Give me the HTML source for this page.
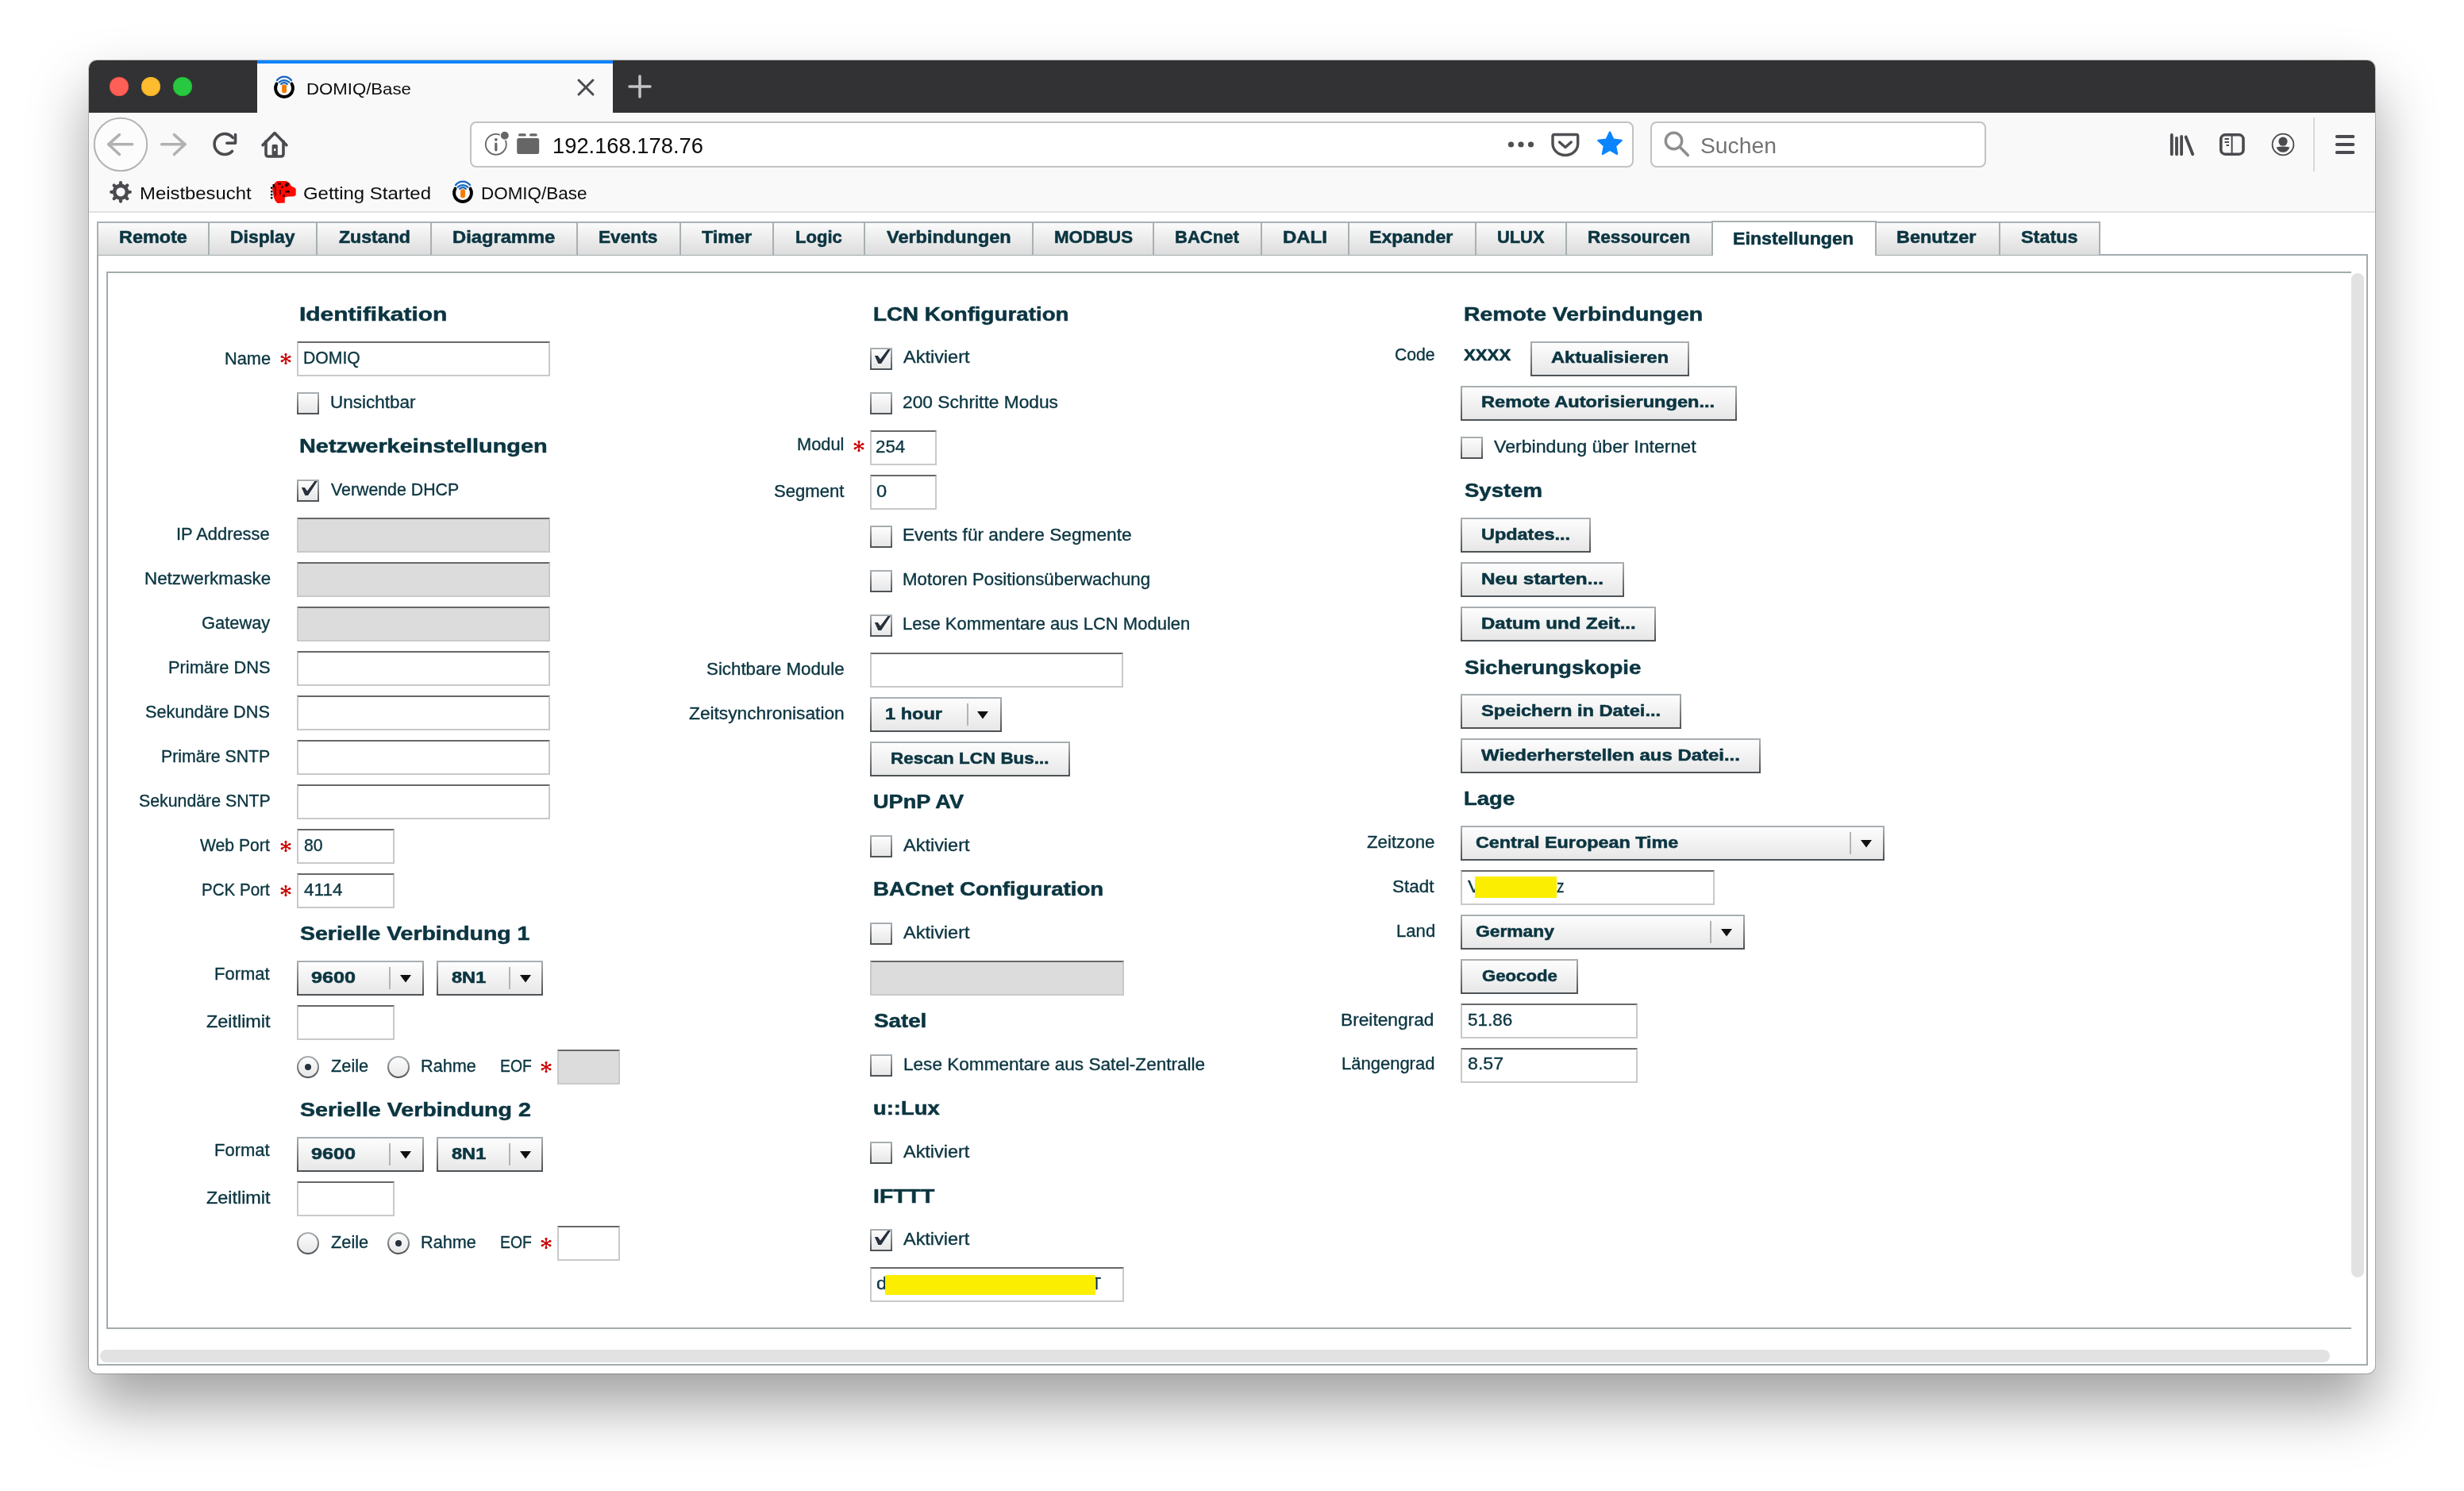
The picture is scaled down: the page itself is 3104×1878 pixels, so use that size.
<!DOCTYPE html>
<html><head><meta charset="utf-8"><title>DOMIQ/Base</title>
<style>
html,body{margin:0;padding:0;}
body{width:3104px;height:1878px;overflow:hidden;position:relative;background:#fff;font-family:'Liberation Sans', sans-serif;}
span{position:absolute;white-space:pre;line-height:1;transform-origin:0 0;}
</style></head><body>
<div style="position:absolute;left:112px;top:76px;width:2880px;height:1654px;border-radius:10px;background:#fff;box-shadow:0 40px 76px rgba(0,0,0,0.375),0 0 0 1px rgba(0,0,0,0.2);overflow:hidden;">
  <div style="position:absolute;left:0;top:0;width:2880px;height:66px;background:#323234;"></div>
  <div style="position:absolute;left:0;top:66px;width:2880px;height:125px;background:#f9f9fa;"></div>
  <div style="position:absolute;left:0;top:190px;width:2880px;height:2px;background:#e1e1e1;"></div>
</div>
<div style="position:absolute;left:138px;top:97px;width:24px;height:24px;border-radius:50%;background:#fe5f57;box-shadow:inset 0 0 0 0.6px #e0443e;"></div><div style="position:absolute;left:178px;top:97px;width:24px;height:24px;border-radius:50%;background:#febc2e;box-shadow:inset 0 0 0 0.6px #dea123;"></div><div style="position:absolute;left:218px;top:97px;width:24px;height:24px;border-radius:50%;background:#28c840;box-shadow:inset 0 0 0 0.6px #1aab29;"></div><div style="position:absolute;left:324px;top:76px;width:448px;height:66px;background:#f9f9fa;"></div><div style="position:absolute;left:324px;top:76px;width:448px;height:4px;background:#0a84ff;"></div><svg style="position:absolute;left:341.9px;top:92.5px;overflow:visible" width="32" height="34" viewBox="0 0 32 34"><g transform="translate(16,18)"><path d="M -9.5 -5.5 A 11 11 0 1 0 9.5 -5.5" fill="none" stroke="#000" stroke-width="3.9" stroke-linecap="round"/><rect x="-2.9" y="-4.7" width="5.9" height="11" rx="2.7" fill="#f57c00"/><g fill="none" stroke="#1565c0" stroke-width="2.3" stroke-linecap="round"><path d="M -8.95 -10 A 11.5 11.5 0 0 1 8.95 -10"/><path d="M -6.25 -7.4 A 9.3 9.3 0 0 1 6.25 -7.4"/><path d="M -3.8 -5.1 A 5.1 5.1 0 0 1 3.8 -5.1"/></g></g></svg><svg style="position:absolute;left:726px;top:98px;overflow:visible" width="24" height="24" viewBox="0 0 24 24"><g stroke="#4a4a4f" stroke-width="3" stroke-linecap="round"><line x1="3" y1="3" x2="21" y2="21"/><line x1="21" y1="3" x2="3" y2="21"/></g></svg><svg style="position:absolute;left:790px;top:93px;overflow:visible" width="32" height="32" viewBox="0 0 32 32"><g stroke="#c4c4c6" stroke-width="3.5" stroke-linecap="round"><line x1="16" y1="3" x2="16" y2="29"/><line x1="3" y1="16" x2="29" y2="16"/></g></svg><svg style="position:absolute;left:116px;top:146px;overflow:visible" width="72" height="72" viewBox="0 0 72 72"><circle cx="36" cy="36" r="33.2" fill="#fcfcfc" stroke="#b3b3b3" stroke-width="2"/></svg><svg style="position:absolute;left:130px;top:160px;overflow:visible" width="44" height="44" viewBox="0 0 44 44"><g fill="none" stroke="#b1b1b3" stroke-width="3.6" stroke-linecap="round" stroke-linejoin="round"><polyline points="20.4,9.6 6.7,21.8 20.4,34.5"/><line x1="6.7" y1="21.8" x2="36.6" y2="21.8"/></g></svg><svg style="position:absolute;left:196px;top:160px;overflow:visible" width="44" height="44" viewBox="0 0 44 44"><g fill="none" stroke="#b1b1b3" stroke-width="3.6" stroke-linecap="round" stroke-linejoin="round"><polyline points="23.4,9.6 37,21.8 23.4,34.5"/><line x1="37" y1="21.8" x2="7.6" y2="21.8"/></g></svg><svg style="position:absolute;left:260px;top:160px;overflow:visible" width="44" height="44" viewBox="0 0 44 44"><g fill="none" stroke="#4a4a4f" stroke-width="3.6" stroke-linecap="round" stroke-linejoin="round"><path d="M 33.3 13.5 A 13 13 0 1 0 32.5 30.5"/><polyline points="36.5,9.6 36.5,20.3 25.8,20.3"/></g></svg><svg style="position:absolute;left:324px;top:160px;overflow:visible" width="44" height="44" viewBox="0 0 44 44"><g fill="none" stroke="#4a4a4f" stroke-width="3.6" stroke-linecap="round" stroke-linejoin="round"><polyline points="7,22.8 22,7.6 36.9,22.8"/><path d="M 11 18 V 34 Q 11 37 14 37 H 30 Q 33 37 33 34 V 18"/></g><rect x="18.6" y="22" width="7.2" height="15" rx="1.5" fill="#4a4a4f"/><rect x="21" y="27.3" width="2.4" height="2.8" fill="#f9f9fa"/></svg><div style="position:absolute;left:592px;top:153px;width:1462px;height:54px;border:2px solid #c2c2c2;border-radius:8px;background:#fff;"></div><svg style="position:absolute;left:605px;top:162px;overflow:visible" width="40" height="40" viewBox="0 0 40 40"><circle cx="19.8" cy="19.8" r="13" fill="none" stroke="#666" stroke-width="1.8"/><circle cx="19.8" cy="13.8" r="1.9" fill="#666"/><rect x="18.2" y="17.5" width="3.2" height="11" rx="1.6" fill="#666"/><circle cx="30.8" cy="8.8" r="5.6" fill="#666" stroke="#fff" stroke-width="1.2"/></svg><svg style="position:absolute;left:650px;top:166px;overflow:visible" width="32" height="30" viewBox="0 0 32 30"><rect x="1.2" y="8" width="28" height="20" rx="2.2" fill="#666"/><rect x="3" y="2.2" width="9.8" height="3.4" rx="1.7" fill="#666"/><rect x="17" y="2.2" width="9.8" height="3.4" rx="1.7" fill="#666"/></svg><svg style="position:absolute;left:1896px;top:174px;overflow:visible" width="40" height="16" viewBox="0 0 40 16"><g fill="#4f4f53"><circle cx="7.5" cy="8" r="3.6"/><circle cx="20" cy="8" r="3.6"/><circle cx="32.5" cy="8" r="3.6"/></g></svg><svg style="position:absolute;left:1952px;top:164px;overflow:visible" width="40" height="36" viewBox="0 0 40 36"><path d="M 6 5.5 H 33.8 Q 35.7 5.5 35.7 7.5 V 17 A 15.8 14.5 0 0 1 4 17 V 7.5 Q 4 5.5 6 5.5 Z" fill="none" stroke="#4f4f53" stroke-width="3.4" stroke-linejoin="round"/><polyline points="12.5,15 19.9,21.5 27.3,15" fill="none" stroke="#4f4f53" stroke-width="3.4" stroke-linecap="round" stroke-linejoin="round"/></svg><svg style="position:absolute;left:2010px;top:164px;overflow:visible" width="36" height="36" viewBox="0 0 36 36"><path d="M 18 2.5 L 22.3 11.8 L 32.6 12.9 L 25 19.8 L 27.1 29.9 L 18 24.8 L 8.9 29.9 L 11 19.8 L 3.4 12.9 L 13.7 11.8 Z" fill="#0a84ff" stroke="#0a84ff" stroke-width="2.4" stroke-linejoin="round"/></svg><div style="position:absolute;left:2079px;top:153px;width:419px;height:54px;border:2px solid #c2c2c2;border-radius:8px;background:#fff;"></div><svg style="position:absolute;left:2092px;top:162px;overflow:visible" width="40" height="40" viewBox="0 0 40 40"><circle cx="16.5" cy="15.5" r="10.2" fill="none" stroke="#8e8e90" stroke-width="3.4"/><line x1="24" y1="23" x2="34.3" y2="33.5" stroke="#8e8e90" stroke-width="3.6" stroke-linecap="round"/></svg><svg style="position:absolute;left:2730px;top:164px;overflow:visible" width="40" height="36" viewBox="0 0 40 36"><g stroke="#4a4a4f" stroke-width="3.8" stroke-linecap="round"><line x1="5.8" y1="5.8" x2="5.8" y2="30.3"/><line x1="12" y1="9.8" x2="12" y2="30.3"/><line x1="18.1" y1="8" x2="18.1" y2="30.3"/><line x1="23.6" y1="8.5" x2="32.2" y2="30.3"/></g></svg><svg style="position:absolute;left:2792px;top:164px;overflow:visible" width="40" height="36" viewBox="0 0 40 36"><rect x="5.8" y="5.8" width="28.2" height="24.4" rx="5.5" fill="none" stroke="#4a4a4f" stroke-width="3.6"/><line x1="19.6" y1="6" x2="19.6" y2="30" stroke="#4a4a4f" stroke-width="2"/><g stroke="#4a4a4f" stroke-width="2"><line x1="10.5" y1="11" x2="16" y2="11"/><line x1="10.5" y1="15" x2="16" y2="15"/><line x1="12.5" y1="19" x2="16" y2="19"/></g></svg><svg style="position:absolute;left:2858px;top:164px;overflow:visible" width="36" height="36" viewBox="0 0 36 36"><circle cx="18" cy="18" r="13.4" fill="none" stroke="#4a4a4f" stroke-width="1.8"/><circle cx="18" cy="14.2" r="5.6" fill="#4a4a4f"/><path d="M 9.6 21.5 Q 18 19.5 26.4 21.5 Q 24 27.8 18 27.8 Q 12 27.8 9.6 21.5 Z" fill="#4a4a4f"/></svg><div style="position:absolute;left:2914px;top:148px;width:2px;height:68px;background:#d9d9db;"></div><svg style="position:absolute;left:2938px;top:164px;overflow:visible" width="32" height="36" viewBox="0 0 32 36"><g stroke="#4a4a4f" stroke-width="3.8" stroke-linecap="round"><line x1="5.8" y1="8" x2="26.4" y2="8"/><line x1="5.8" y1="18" x2="26.4" y2="18"/><line x1="5.8" y1="28" x2="26.4" y2="28"/></g></svg><svg style="position:absolute;left:134px;top:226px;overflow:visible" width="36" height="32" viewBox="0 0 36 32"><g transform="translate(18,15.8)"><circle r="7.9" fill="none" stroke="#4a4a4f" stroke-width="4.6"/><g stroke="#4a4a4f" stroke-width="4.2" stroke-linecap="round"><line x1="0" y1="-9" x2="0" y2="-11.8" transform="rotate(0)"/><line x1="0" y1="-9" x2="0" y2="-11.8" transform="rotate(45)"/><line x1="0" y1="-9" x2="0" y2="-11.8" transform="rotate(90)"/><line x1="0" y1="-9" x2="0" y2="-11.8" transform="rotate(135)"/><line x1="0" y1="-9" x2="0" y2="-11.8" transform="rotate(180)"/><line x1="0" y1="-9" x2="0" y2="-11.8" transform="rotate(225)"/><line x1="0" y1="-9" x2="0" y2="-11.8" transform="rotate(270)"/><line x1="0" y1="-9" x2="0" y2="-11.8" transform="rotate(315)"/></g></g></svg><svg style="position:absolute;left:335px;top:220px;overflow:visible" width="44" height="44" viewBox="0 0 44 44"><path d="M 14.2 8 L 25.6 8 L 29.9 10.6 L 31.7 14.2 L 35.9 16.3 L 37.7 18.1 L 37.7 25.6 L 35.9 27.2 L 26.6 27.8 L 23.8 28.7 L 23.8 35.6 L 14.5 35.9 L 12 33.2 L 10 28.7 L 8.1 18.1 L 10 12 L 12 9.7 Z" fill="#ff0a00"/><g fill="#6a0000"><rect x="15" y="10" width="4" height="3"/><rect x="19" y="14" width="3" height="3"/><rect x="17" y="19" width="2" height="6"/><rect x="25" y="10" width="4" height="4"/><rect x="24" y="20" width="6" height="3"/><rect x="11" y="15" width="2" height="12"/><rect x="21" y="25" width="3" height="3"/></g><g fill="#000"><rect x="6" y="15.5" width="2.4" height="2.4"/><rect x="6" y="20" width="2.4" height="2.4"/><rect x="6" y="24" width="2.4" height="2.4"/><rect x="6" y="28" width="2.4" height="2.4"/><rect x="8.5" y="12" width="2.4" height="4"/><rect x="24" y="12" width="3" height="3"/><rect x="27" y="20" width="2" height="2"/></g></svg><svg style="position:absolute;left:566.8px;top:224.8px;overflow:visible" width="32" height="34" viewBox="0 0 32 34"><g transform="translate(16,18)"><path d="M -9.5 -5.5 A 11 11 0 1 0 9.5 -5.5" fill="none" stroke="#000" stroke-width="3.9" stroke-linecap="round"/><rect x="-2.9" y="-4.7" width="5.9" height="11" rx="2.7" fill="#f57c00"/><g fill="none" stroke="#1565c0" stroke-width="2.3" stroke-linecap="round"><path d="M -8.95 -10 A 11.5 11.5 0 0 1 8.95 -10"/><path d="M -6.25 -7.4 A 9.3 9.3 0 0 1 6.25 -7.4"/><path d="M -3.8 -5.1 A 5.1 5.1 0 0 1 3.8 -5.1"/></g></g></svg>
<div style="position:absolute;left:122px;top:320px;width:2857px;height:1396px;border:2px solid #a3abae;"></div>
<div style="position:absolute;left:134px;top:342px;width:2826px;height:1328px;border:2px solid #a3abae;border-right:none;"></div>
<div style="position:absolute;left:2962px;top:344px;width:16px;height:1265px;border-radius:8px;background:#e2e2e2;"></div>
<div style="position:absolute;left:126px;top:1700px;width:2809px;height:16px;border-radius:8px;background:#e2e2e2;"></div>
<div style="position:absolute;left:122px;top:279px;width:138px;height:40px;background:linear-gradient(#fbfbfb,#dcdcdc);border:2px solid #a9b0b3;border-bottom:none;"></div><div style="position:absolute;left:262px;top:279px;width:134px;height:40px;background:linear-gradient(#fbfbfb,#dcdcdc);border:2px solid #a9b0b3;border-bottom:none;"></div><div style="position:absolute;left:398px;top:279px;width:142px;height:40px;background:linear-gradient(#fbfbfb,#dcdcdc);border:2px solid #a9b0b3;border-bottom:none;"></div><div style="position:absolute;left:542px;top:279px;width:182px;height:40px;background:linear-gradient(#fbfbfb,#dcdcdc);border:2px solid #a9b0b3;border-bottom:none;"></div><div style="position:absolute;left:726px;top:279px;width:128px;height:40px;background:linear-gradient(#fbfbfb,#dcdcdc);border:2px solid #a9b0b3;border-bottom:none;"></div><div style="position:absolute;left:856px;top:279px;width:115px;height:40px;background:linear-gradient(#fbfbfb,#dcdcdc);border:2px solid #a9b0b3;border-bottom:none;"></div><div style="position:absolute;left:973px;top:279px;width:113px;height:40px;background:linear-gradient(#fbfbfb,#dcdcdc);border:2px solid #a9b0b3;border-bottom:none;"></div><div style="position:absolute;left:1088px;top:279px;width:210px;height:40px;background:linear-gradient(#fbfbfb,#dcdcdc);border:2px solid #a9b0b3;border-bottom:none;"></div><div style="position:absolute;left:1300px;top:279px;width:150px;height:40px;background:linear-gradient(#fbfbfb,#dcdcdc);border:2px solid #a9b0b3;border-bottom:none;"></div><div style="position:absolute;left:1452px;top:279px;width:134px;height:40px;background:linear-gradient(#fbfbfb,#dcdcdc);border:2px solid #a9b0b3;border-bottom:none;"></div><div style="position:absolute;left:1588px;top:279px;width:108px;height:40px;background:linear-gradient(#fbfbfb,#dcdcdc);border:2px solid #a9b0b3;border-bottom:none;"></div><div style="position:absolute;left:1698px;top:279px;width:158px;height:40px;background:linear-gradient(#fbfbfb,#dcdcdc);border:2px solid #a9b0b3;border-bottom:none;"></div><div style="position:absolute;left:1858px;top:279px;width:112px;height:40px;background:linear-gradient(#fbfbfb,#dcdcdc);border:2px solid #a9b0b3;border-bottom:none;"></div><div style="position:absolute;left:1972px;top:279px;width:182px;height:40px;background:linear-gradient(#fbfbfb,#dcdcdc);border:2px solid #a9b0b3;border-bottom:none;"></div><div style="position:absolute;left:2156px;top:278px;width:204px;height:42px;background:#fff;border:2px solid #a9b0b3;border-bottom:none;"></div><div style="position:absolute;left:2362px;top:279px;width:154px;height:40px;background:linear-gradient(#fbfbfb,#dcdcdc);border:2px solid #a9b0b3;border-bottom:none;"></div><div style="position:absolute;left:2518px;top:279px;width:124px;height:40px;background:linear-gradient(#fbfbfb,#dcdcdc);border:2px solid #a9b0b3;border-bottom:none;"></div>
<div style="position:absolute;left:374px;top:430px;width:315px;height:40px;background:#fff;border:2px solid #c9c9c9;border-top-color:#676767;"></div><svg style="position:absolute;left:352.4px;top:444.4px" width="16" height="16"><g stroke="#cc0000" stroke-width="1.6" stroke-linecap="round"><line x1="8.00" y1="2.40" x2="8.00" y2="13.60"/><line x1="3.15" y1="5.20" x2="12.85" y2="10.80"/><line x1="3.15" y1="10.80" x2="12.85" y2="5.20"/></g><g fill="#cc0000"><circle cx="8.00" cy="13.60" r="1.55"/><circle cx="8.00" cy="2.40" r="1.55"/><circle cx="12.85" cy="10.80" r="1.55"/><circle cx="3.15" cy="5.20" r="1.55"/><circle cx="12.85" cy="5.20" r="1.55"/><circle cx="3.15" cy="10.80" r="1.55"/></g><circle cx="8" cy="8" r="1.7" fill="#cc0000"/></svg><div style="position:absolute;left:374px;top:494px;width:24px;height:24px;border:2px solid transparent;border-image:linear-gradient(#a9afb2,#4d5256) 1;background:linear-gradient(#fdfdfd,#e7e7e7);"></div><div style="position:absolute;left:374px;top:604px;width:24px;height:24px;border:2px solid transparent;border-image:linear-gradient(#a9afb2,#4d5256) 1;background:linear-gradient(#fdfdfd,#e7e7e7);"></div><svg style="position:absolute;left:374px;top:604px" width="28" height="28"><polygon points="5.9,10.1 9.8,10.1 13.0,14.4 22.4,2.0 25.9,2.0 14.1,19.9 10.3,19.9" fill="#27313c"/></svg><div style="position:absolute;left:374px;top:652px;width:315px;height:40px;background:#dcdcdc;border:2px solid #c9c9c9;border-top-color:#676767;"></div><div style="position:absolute;left:374px;top:708px;width:315px;height:40px;background:#dcdcdc;border:2px solid #c9c9c9;border-top-color:#676767;"></div><div style="position:absolute;left:374px;top:764px;width:315px;height:40px;background:#dcdcdc;border:2px solid #c9c9c9;border-top-color:#676767;"></div><div style="position:absolute;left:374px;top:820px;width:315px;height:40px;background:#fff;border:2px solid #c9c9c9;border-top-color:#676767;"></div><div style="position:absolute;left:374px;top:876px;width:315px;height:40px;background:#fff;border:2px solid #c9c9c9;border-top-color:#676767;"></div><div style="position:absolute;left:374px;top:932px;width:315px;height:40px;background:#fff;border:2px solid #c9c9c9;border-top-color:#676767;"></div><div style="position:absolute;left:374px;top:988px;width:315px;height:40px;background:#fff;border:2px solid #c9c9c9;border-top-color:#676767;"></div><div style="position:absolute;left:374px;top:1044px;width:119px;height:40px;background:#fff;border:2px solid #c9c9c9;border-top-color:#676767;"></div><svg style="position:absolute;left:352.4px;top:1058.4px" width="16" height="16"><g stroke="#cc0000" stroke-width="1.6" stroke-linecap="round"><line x1="8.00" y1="2.40" x2="8.00" y2="13.60"/><line x1="3.15" y1="5.20" x2="12.85" y2="10.80"/><line x1="3.15" y1="10.80" x2="12.85" y2="5.20"/></g><g fill="#cc0000"><circle cx="8.00" cy="13.60" r="1.55"/><circle cx="8.00" cy="2.40" r="1.55"/><circle cx="12.85" cy="10.80" r="1.55"/><circle cx="3.15" cy="5.20" r="1.55"/><circle cx="12.85" cy="5.20" r="1.55"/><circle cx="3.15" cy="10.80" r="1.55"/></g><circle cx="8" cy="8" r="1.7" fill="#cc0000"/></svg><div style="position:absolute;left:374px;top:1100px;width:119px;height:40px;background:#fff;border:2px solid #c9c9c9;border-top-color:#676767;"></div><svg style="position:absolute;left:352.4px;top:1114.4px" width="16" height="16"><g stroke="#cc0000" stroke-width="1.6" stroke-linecap="round"><line x1="8.00" y1="2.40" x2="8.00" y2="13.60"/><line x1="3.15" y1="5.20" x2="12.85" y2="10.80"/><line x1="3.15" y1="10.80" x2="12.85" y2="5.20"/></g><g fill="#cc0000"><circle cx="8.00" cy="13.60" r="1.55"/><circle cx="8.00" cy="2.40" r="1.55"/><circle cx="12.85" cy="10.80" r="1.55"/><circle cx="3.15" cy="5.20" r="1.55"/><circle cx="12.85" cy="5.20" r="1.55"/><circle cx="3.15" cy="10.80" r="1.55"/></g><circle cx="8" cy="8" r="1.7" fill="#cc0000"/></svg><div style="position:absolute;left:374px;top:1210px;width:156px;height:40px;border:2px solid transparent;border-image:linear-gradient(#a9afb2,#4d5256) 1;background:linear-gradient(#fdfdfd,#e7e7e7);"></div><div style="position:absolute;left:490px;top:1218px;width:2px;height:28px;background:#b0b4b7;"></div><svg style="position:absolute;left:504px;top:1228px" width="14" height="10"><polygon points="0,0 14,0 7,9.5" fill="#111"/></svg><div style="position:absolute;left:550px;top:1210px;width:130px;height:40px;border:2px solid transparent;border-image:linear-gradient(#a9afb2,#4d5256) 1;background:linear-gradient(#fdfdfd,#e7e7e7);"></div><div style="position:absolute;left:641px;top:1218px;width:2px;height:28px;background:#b0b4b7;"></div><svg style="position:absolute;left:655px;top:1228px" width="14" height="10"><polygon points="0,0 14,0 7,9.5" fill="#111"/></svg><div style="position:absolute;left:374px;top:1266px;width:119px;height:40px;background:#fff;border:2px solid #c9c9c9;border-top-color:#676767;"></div><svg style="position:absolute;left:374px;top:1330px" width="28" height="28"><defs><linearGradient id="rg3741330" x1="0" y1="0" x2="0" y2="1"><stop offset="0" stop-color="#a9afb2"/><stop offset="1" stop-color="#4d5256"/></linearGradient><linearGradient id="rf3741330" x1="0" y1="0" x2="0" y2="1"><stop offset="0" stop-color="#fdfdfd"/><stop offset="1" stop-color="#e7e7e7"/></linearGradient></defs><circle cx="14" cy="14" r="13" fill="url(#rf3741330)" stroke="url(#rg3741330)" stroke-width="2"/><circle cx="14" cy="14" r="4" fill="#27313c"/></svg><svg style="position:absolute;left:488px;top:1330px" width="28" height="28"><defs><linearGradient id="rg4881330" x1="0" y1="0" x2="0" y2="1"><stop offset="0" stop-color="#a9afb2"/><stop offset="1" stop-color="#4d5256"/></linearGradient><linearGradient id="rf4881330" x1="0" y1="0" x2="0" y2="1"><stop offset="0" stop-color="#fdfdfd"/><stop offset="1" stop-color="#e7e7e7"/></linearGradient></defs><circle cx="14" cy="14" r="13" fill="url(#rf4881330)" stroke="url(#rg4881330)" stroke-width="2"/></svg><svg style="position:absolute;left:680px;top:1336.4px" width="16" height="16"><g stroke="#cc0000" stroke-width="1.6" stroke-linecap="round"><line x1="8.00" y1="2.40" x2="8.00" y2="13.60"/><line x1="3.15" y1="5.20" x2="12.85" y2="10.80"/><line x1="3.15" y1="10.80" x2="12.85" y2="5.20"/></g><g fill="#cc0000"><circle cx="8.00" cy="13.60" r="1.55"/><circle cx="8.00" cy="2.40" r="1.55"/><circle cx="12.85" cy="10.80" r="1.55"/><circle cx="3.15" cy="5.20" r="1.55"/><circle cx="12.85" cy="5.20" r="1.55"/><circle cx="3.15" cy="10.80" r="1.55"/></g><circle cx="8" cy="8" r="1.7" fill="#cc0000"/></svg><div style="position:absolute;left:702px;top:1322px;width:75px;height:40px;background:#dcdcdc;border:2px solid #c9c9c9;border-top-color:#676767;"></div><div style="position:absolute;left:374px;top:1432px;width:156px;height:40px;border:2px solid transparent;border-image:linear-gradient(#a9afb2,#4d5256) 1;background:linear-gradient(#fdfdfd,#e7e7e7);"></div><div style="position:absolute;left:490px;top:1440px;width:2px;height:28px;background:#b0b4b7;"></div><svg style="position:absolute;left:504px;top:1450px" width="14" height="10"><polygon points="0,0 14,0 7,9.5" fill="#111"/></svg><div style="position:absolute;left:550px;top:1432px;width:130px;height:40px;border:2px solid transparent;border-image:linear-gradient(#a9afb2,#4d5256) 1;background:linear-gradient(#fdfdfd,#e7e7e7);"></div><div style="position:absolute;left:641px;top:1440px;width:2px;height:28px;background:#b0b4b7;"></div><svg style="position:absolute;left:655px;top:1450px" width="14" height="10"><polygon points="0,0 14,0 7,9.5" fill="#111"/></svg><div style="position:absolute;left:374px;top:1488px;width:119px;height:40px;background:#fff;border:2px solid #c9c9c9;border-top-color:#676767;"></div><svg style="position:absolute;left:374px;top:1552px" width="28" height="28"><defs><linearGradient id="rg3741552" x1="0" y1="0" x2="0" y2="1"><stop offset="0" stop-color="#a9afb2"/><stop offset="1" stop-color="#4d5256"/></linearGradient><linearGradient id="rf3741552" x1="0" y1="0" x2="0" y2="1"><stop offset="0" stop-color="#fdfdfd"/><stop offset="1" stop-color="#e7e7e7"/></linearGradient></defs><circle cx="14" cy="14" r="13" fill="url(#rf3741552)" stroke="url(#rg3741552)" stroke-width="2"/></svg><svg style="position:absolute;left:488px;top:1552px" width="28" height="28"><defs><linearGradient id="rg4881552" x1="0" y1="0" x2="0" y2="1"><stop offset="0" stop-color="#a9afb2"/><stop offset="1" stop-color="#4d5256"/></linearGradient><linearGradient id="rf4881552" x1="0" y1="0" x2="0" y2="1"><stop offset="0" stop-color="#fdfdfd"/><stop offset="1" stop-color="#e7e7e7"/></linearGradient></defs><circle cx="14" cy="14" r="13" fill="url(#rf4881552)" stroke="url(#rg4881552)" stroke-width="2"/><circle cx="14" cy="14" r="4" fill="#27313c"/></svg><svg style="position:absolute;left:680px;top:1558.4px" width="16" height="16"><g stroke="#cc0000" stroke-width="1.6" stroke-linecap="round"><line x1="8.00" y1="2.40" x2="8.00" y2="13.60"/><line x1="3.15" y1="5.20" x2="12.85" y2="10.80"/><line x1="3.15" y1="10.80" x2="12.85" y2="5.20"/></g><g fill="#cc0000"><circle cx="8.00" cy="13.60" r="1.55"/><circle cx="8.00" cy="2.40" r="1.55"/><circle cx="12.85" cy="10.80" r="1.55"/><circle cx="3.15" cy="5.20" r="1.55"/><circle cx="12.85" cy="5.20" r="1.55"/><circle cx="3.15" cy="10.80" r="1.55"/></g><circle cx="8" cy="8" r="1.7" fill="#cc0000"/></svg><div style="position:absolute;left:702px;top:1544px;width:75px;height:40px;background:#fff;border:2px solid #c9c9c9;border-top-color:#676767;"></div><div style="position:absolute;left:1096px;top:438px;width:24px;height:24px;border:2px solid transparent;border-image:linear-gradient(#a9afb2,#4d5256) 1;background:linear-gradient(#fdfdfd,#e7e7e7);"></div><svg style="position:absolute;left:1096px;top:438px" width="28" height="28"><polygon points="5.9,10.1 9.8,10.1 13.0,14.4 22.4,2.0 25.9,2.0 14.1,19.9 10.3,19.9" fill="#27313c"/></svg><div style="position:absolute;left:1096px;top:494px;width:24px;height:24px;border:2px solid transparent;border-image:linear-gradient(#a9afb2,#4d5256) 1;background:linear-gradient(#fdfdfd,#e7e7e7);"></div><div style="position:absolute;left:1096px;top:542px;width:80px;height:40px;background:#fff;border:2px solid #c9c9c9;border-top-color:#676767;"></div><svg style="position:absolute;left:1074px;top:553.5px" width="16" height="16"><g stroke="#cc0000" stroke-width="1.6" stroke-linecap="round"><line x1="8.00" y1="2.40" x2="8.00" y2="13.60"/><line x1="3.15" y1="5.20" x2="12.85" y2="10.80"/><line x1="3.15" y1="10.80" x2="12.85" y2="5.20"/></g><g fill="#cc0000"><circle cx="8.00" cy="13.60" r="1.55"/><circle cx="8.00" cy="2.40" r="1.55"/><circle cx="12.85" cy="10.80" r="1.55"/><circle cx="3.15" cy="5.20" r="1.55"/><circle cx="12.85" cy="5.20" r="1.55"/><circle cx="3.15" cy="10.80" r="1.55"/></g><circle cx="8" cy="8" r="1.7" fill="#cc0000"/></svg><div style="position:absolute;left:1096px;top:598px;width:80px;height:40px;background:#fff;border:2px solid #c9c9c9;border-top-color:#676767;"></div><div style="position:absolute;left:1096px;top:662px;width:24px;height:24px;border:2px solid transparent;border-image:linear-gradient(#a9afb2,#4d5256) 1;background:linear-gradient(#fdfdfd,#e7e7e7);"></div><div style="position:absolute;left:1096px;top:718px;width:24px;height:24px;border:2px solid transparent;border-image:linear-gradient(#a9afb2,#4d5256) 1;background:linear-gradient(#fdfdfd,#e7e7e7);"></div><div style="position:absolute;left:1096px;top:774px;width:24px;height:24px;border:2px solid transparent;border-image:linear-gradient(#a9afb2,#4d5256) 1;background:linear-gradient(#fdfdfd,#e7e7e7);"></div><svg style="position:absolute;left:1096px;top:774px" width="28" height="28"><polygon points="5.9,10.1 9.8,10.1 13.0,14.4 22.4,2.0 25.9,2.0 14.1,19.9 10.3,19.9" fill="#27313c"/></svg><div style="position:absolute;left:1096px;top:822px;width:315px;height:40px;background:#fff;border:2px solid #c9c9c9;border-top-color:#676767;"></div><div style="position:absolute;left:1096px;top:878px;width:162px;height:40px;border:2px solid transparent;border-image:linear-gradient(#a9afb2,#4d5256) 1;background:linear-gradient(#fdfdfd,#e7e7e7);"></div><div style="position:absolute;left:1218px;top:886px;width:2px;height:28px;background:#b0b4b7;"></div><svg style="position:absolute;left:1231px;top:896px" width="14" height="10"><polygon points="0,0 14,0 7,9.5" fill="#111"/></svg><div style="position:absolute;left:1096px;top:934px;width:248px;height:40px;border:2px solid transparent;border-image:linear-gradient(#a9afb2,#4d5256) 1;background:linear-gradient(#fdfdfd,#e7e7e7);"></div><div style="position:absolute;left:1096px;top:1052px;width:24px;height:24px;border:2px solid transparent;border-image:linear-gradient(#a9afb2,#4d5256) 1;background:linear-gradient(#fdfdfd,#e7e7e7);"></div><div style="position:absolute;left:1096px;top:1162px;width:24px;height:24px;border:2px solid transparent;border-image:linear-gradient(#a9afb2,#4d5256) 1;background:linear-gradient(#fdfdfd,#e7e7e7);"></div><div style="position:absolute;left:1096px;top:1210px;width:316px;height:40px;background:#dcdcdc;border:2px solid #c9c9c9;border-top-color:#676767;"></div><div style="position:absolute;left:1096px;top:1328px;width:24px;height:24px;border:2px solid transparent;border-image:linear-gradient(#a9afb2,#4d5256) 1;background:linear-gradient(#fdfdfd,#e7e7e7);"></div><div style="position:absolute;left:1096px;top:1438px;width:24px;height:24px;border:2px solid transparent;border-image:linear-gradient(#a9afb2,#4d5256) 1;background:linear-gradient(#fdfdfd,#e7e7e7);"></div><div style="position:absolute;left:1096px;top:1548px;width:24px;height:24px;border:2px solid transparent;border-image:linear-gradient(#a9afb2,#4d5256) 1;background:linear-gradient(#fdfdfd,#e7e7e7);"></div><svg style="position:absolute;left:1096px;top:1548px" width="28" height="28"><polygon points="5.9,10.1 9.8,10.1 13.0,14.4 22.4,2.0 25.9,2.0 14.1,19.9 10.3,19.9" fill="#27313c"/></svg><div style="position:absolute;left:1096px;top:1596px;width:316px;height:40px;background:#fff;border:2px solid #c9c9c9;border-top-color:#676767;"></div><div style="position:absolute;left:1928px;top:430px;width:196px;height:40px;border:2px solid transparent;border-image:linear-gradient(#a9afb2,#4d5256) 1;background:linear-gradient(#fdfdfd,#e7e7e7);"></div><div style="position:absolute;left:1840px;top:486px;width:344px;height:40px;border:2px solid transparent;border-image:linear-gradient(#a9afb2,#4d5256) 1;background:linear-gradient(#fdfdfd,#e7e7e7);"></div><div style="position:absolute;left:1840px;top:550px;width:24px;height:24px;border:2px solid transparent;border-image:linear-gradient(#a9afb2,#4d5256) 1;background:linear-gradient(#fdfdfd,#e7e7e7);"></div><div style="position:absolute;left:1840px;top:652px;width:160px;height:40px;border:2px solid transparent;border-image:linear-gradient(#a9afb2,#4d5256) 1;background:linear-gradient(#fdfdfd,#e7e7e7);"></div><div style="position:absolute;left:1840px;top:708px;width:202px;height:40px;border:2px solid transparent;border-image:linear-gradient(#a9afb2,#4d5256) 1;background:linear-gradient(#fdfdfd,#e7e7e7);"></div><div style="position:absolute;left:1840px;top:764px;width:242px;height:40px;border:2px solid transparent;border-image:linear-gradient(#a9afb2,#4d5256) 1;background:linear-gradient(#fdfdfd,#e7e7e7);"></div><div style="position:absolute;left:1840px;top:874px;width:274px;height:40px;border:2px solid transparent;border-image:linear-gradient(#a9afb2,#4d5256) 1;background:linear-gradient(#fdfdfd,#e7e7e7);"></div><div style="position:absolute;left:1840px;top:930px;width:374px;height:40px;border:2px solid transparent;border-image:linear-gradient(#a9afb2,#4d5256) 1;background:linear-gradient(#fdfdfd,#e7e7e7);"></div><div style="position:absolute;left:1840px;top:1040px;width:530px;height:40px;border:2px solid transparent;border-image:linear-gradient(#a9afb2,#4d5256) 1;background:linear-gradient(#fdfdfd,#e7e7e7);"></div><div style="position:absolute;left:2330px;top:1048px;width:2px;height:28px;background:#b0b4b7;"></div><svg style="position:absolute;left:2344px;top:1058px" width="14" height="10"><polygon points="0,0 14,0 7,9.5" fill="#111"/></svg><div style="position:absolute;left:1840px;top:1096px;width:316px;height:40px;background:#fff;border:2px solid #c9c9c9;border-top-color:#676767;"></div><div style="position:absolute;left:1840px;top:1152px;width:354px;height:40px;border:2px solid transparent;border-image:linear-gradient(#a9afb2,#4d5256) 1;background:linear-gradient(#fdfdfd,#e7e7e7);"></div><div style="position:absolute;left:2154px;top:1160px;width:2px;height:28px;background:#b0b4b7;"></div><svg style="position:absolute;left:2167.5px;top:1170px" width="14" height="10"><polygon points="0,0 14,0 7,9.5" fill="#111"/></svg><div style="position:absolute;left:1840px;top:1208px;width:144px;height:40px;border:2px solid transparent;border-image:linear-gradient(#a9afb2,#4d5256) 1;background:linear-gradient(#fdfdfd,#e7e7e7);"></div><div style="position:absolute;left:1840px;top:1264px;width:219px;height:40px;background:#fff;border:2px solid #c9c9c9;border-top-color:#676767;"></div><div style="position:absolute;left:1840px;top:1320px;width:219px;height:40px;background:#fff;border:2px solid #c9c9c9;border-top-color:#676767;"></div>
<div style="position:absolute;left:0;top:0;width:3104px;height:1878px;will-change:transform;"><span style="left:376.8px;top:384.0px;font-size:24.5px;font-weight:bold;color:#0b3541;transform:scaleX(1.2228);-webkit-text-stroke:0.55px #0b3541;">Identifikation</span><span style="left:283.0px;top:441.6px;font-size:21.5px;font-weight:normal;color:#0b3541;transform:scaleX(1.0109);-webkit-text-stroke:0.35px #0b3541;">Name</span><span style="left:382.3px;top:441.0px;font-size:21.5px;font-weight:normal;color:#0b3541;transform:scaleX(0.9855);-webkit-text-stroke:0.35px #0b3541;">DOMIQ</span><span style="left:415.5px;top:496.8px;font-size:21.5px;font-weight:normal;color:#0b3541;transform:scaleX(1.0452);-webkit-text-stroke:0.35px #0b3541;">Unsichtbar</span><span style="left:376.8px;top:549.8px;font-size:24.5px;font-weight:bold;color:#0b3541;transform:scaleX(1.1775);-webkit-text-stroke:0.55px #0b3541;">Netzwerkeinstellungen</span><span style="left:416.5px;top:607.0px;font-size:21.5px;font-weight:normal;color:#0b3541;transform:scaleX(0.9915);-webkit-text-stroke:0.35px #0b3541;">Verwende DHCP</span><span style="left:221.7px;top:663.0px;font-size:21.5px;font-weight:normal;color:#0b3541;transform:scaleX(1.0186);-webkit-text-stroke:0.35px #0b3541;">IP Addresse</span><span style="left:181.8px;top:719.0px;font-size:21.5px;font-weight:normal;color:#0b3541;transform:scaleX(1.0413);-webkit-text-stroke:0.35px #0b3541;">Netzwerkmaske</span><span style="left:253.5px;top:775.0px;font-size:21.5px;font-weight:normal;color:#0b3541;transform:scaleX(1.0167);-webkit-text-stroke:0.35px #0b3541;">Gateway</span><span style="left:211.9px;top:831.0px;font-size:21.5px;font-weight:normal;color:#0b3541;transform:scaleX(1.0145);-webkit-text-stroke:0.35px #0b3541;">Primäre DNS</span><span style="left:183.4px;top:887.0px;font-size:21.5px;font-weight:normal;color:#0b3541;transform:scaleX(1.0102);-webkit-text-stroke:0.35px #0b3541;">Sekundäre DNS</span><span style="left:203.0px;top:943.0px;font-size:21.5px;font-weight:normal;color:#0b3541;transform:scaleX(0.9910);-webkit-text-stroke:0.35px #0b3541;">Primäre SNTP</span><span style="left:174.6px;top:999.0px;font-size:21.5px;font-weight:normal;color:#0b3541;transform:scaleX(0.9906);-webkit-text-stroke:0.35px #0b3541;">Sekundäre SNTP</span><span style="left:252.2px;top:1055.0px;font-size:21.5px;font-weight:normal;color:#0b3541;transform:scaleX(0.9838);-webkit-text-stroke:0.35px #0b3541;">Web Port</span><span style="left:382.6px;top:1055.0px;font-size:21.5px;font-weight:normal;color:#0b3541;transform:scaleX(0.9851);-webkit-text-stroke:0.35px #0b3541;">80</span><span style="left:254.1px;top:1111.0px;font-size:21.5px;font-weight:normal;color:#0b3541;transform:scaleX(0.9578);-webkit-text-stroke:0.35px #0b3541;">PCK Port</span><span style="left:383.0px;top:1111.0px;font-size:21.5px;font-weight:normal;color:#0b3541;transform:scaleX(1.0502);-webkit-text-stroke:0.35px #0b3541;">4114</span><span style="left:378.0px;top:1164.0px;font-size:24.5px;font-weight:bold;color:#0b3541;transform:scaleX(1.1616);-webkit-text-stroke:0.55px #0b3541;">Serielle Verbindung 1</span><span style="left:270.3px;top:1216.5px;font-size:21.5px;font-weight:normal;color:#0b3541;transform:scaleX(1.0236);-webkit-text-stroke:0.35px #0b3541;">Format</span><span style="left:392.3px;top:1221.0px;font-size:20.5px;font-weight:bold;color:#0b3541;transform:scaleX(1.2278);-webkit-text-stroke:0.55px #0b3541;">9600</span><span style="left:568.5px;top:1221.0px;font-size:20.5px;font-weight:bold;color:#0b3541;transform:scaleX(1.1504);-webkit-text-stroke:0.55px #0b3541;">8N1</span><span style="left:259.5px;top:1276.5px;font-size:21.5px;font-weight:normal;color:#0b3541;transform:scaleX(1.0867);-webkit-text-stroke:0.35px #0b3541;">Zeitlimit</span><span style="left:416.9px;top:1333.0px;font-size:21.5px;font-weight:normal;color:#0b3541;transform:scaleX(1.0122);-webkit-text-stroke:0.35px #0b3541;">Zeile</span><span style="left:530.0px;top:1333.0px;font-size:21.5px;font-weight:normal;color:#0b3541;transform:scaleX(1.0082);-webkit-text-stroke:0.35px #0b3541;">Rahme</span><span style="left:629.5px;top:1333.0px;font-size:21.5px;font-weight:normal;color:#0b3541;transform:scaleX(0.8987);-webkit-text-stroke:0.35px #0b3541;">EOF</span><span style="left:378.0px;top:1386.0px;font-size:24.5px;font-weight:bold;color:#0b3541;transform:scaleX(1.1676);-webkit-text-stroke:0.55px #0b3541;">Serielle Verbindung 2</span><span style="left:270.3px;top:1438.5px;font-size:21.5px;font-weight:normal;color:#0b3541;transform:scaleX(1.0236);-webkit-text-stroke:0.35px #0b3541;">Format</span><span style="left:392.3px;top:1443.0px;font-size:20.5px;font-weight:bold;color:#0b3541;transform:scaleX(1.2278);-webkit-text-stroke:0.55px #0b3541;">9600</span><span style="left:568.5px;top:1443.0px;font-size:20.5px;font-weight:bold;color:#0b3541;transform:scaleX(1.1504);-webkit-text-stroke:0.55px #0b3541;">8N1</span><span style="left:259.5px;top:1498.5px;font-size:21.5px;font-weight:normal;color:#0b3541;transform:scaleX(1.0867);-webkit-text-stroke:0.35px #0b3541;">Zeitlimit</span><span style="left:416.9px;top:1555.0px;font-size:21.5px;font-weight:normal;color:#0b3541;transform:scaleX(1.0122);-webkit-text-stroke:0.35px #0b3541;">Zeile</span><span style="left:530.0px;top:1555.0px;font-size:21.5px;font-weight:normal;color:#0b3541;transform:scaleX(1.0082);-webkit-text-stroke:0.35px #0b3541;">Rahme</span><span style="left:629.5px;top:1555.0px;font-size:21.5px;font-weight:normal;color:#0b3541;transform:scaleX(0.8987);-webkit-text-stroke:0.35px #0b3541;">EOF</span><span style="left:1099.7px;top:384.3px;font-size:24.5px;font-weight:bold;color:#0b3541;transform:scaleX(1.1322);-webkit-text-stroke:0.55px #0b3541;">LCN Konfiguration</span><span style="left:1138.3px;top:440.4px;font-size:21.5px;font-weight:normal;color:#0b3541;transform:scaleX(1.0917);-webkit-text-stroke:0.35px #0b3541;">Aktiviert</span><span style="left:1137.2px;top:496.8px;font-size:21.5px;font-weight:normal;color:#0b3541;transform:scaleX(1.0578);-webkit-text-stroke:0.35px #0b3541;">200 Schritte Modus</span><span style="left:1003.9px;top:549.5px;font-size:21.5px;font-weight:normal;color:#0b3541;transform:scaleX(1.0144);-webkit-text-stroke:0.35px #0b3541;">Modul</span><span style="left:1103.4px;top:553.0px;font-size:21.5px;font-weight:normal;color:#0b3541;transform:scaleX(1.0368);-webkit-text-stroke:0.35px #0b3541;">254</span><span style="left:974.5px;top:608.6px;font-size:21.5px;font-weight:normal;color:#0b3541;transform:scaleX(1.0281);-webkit-text-stroke:0.35px #0b3541;">Segment</span><span style="left:1104.4px;top:609.0px;font-size:21.5px;font-weight:normal;color:#0b3541;transform:scaleX(1.1000);-webkit-text-stroke:0.35px #0b3541;">0</span><span style="left:1137.2px;top:664.4px;font-size:21.5px;font-weight:normal;color:#0b3541;transform:scaleX(1.0543);-webkit-text-stroke:0.35px #0b3541;">Events für andere Segmente</span><span style="left:1137.3px;top:720.4px;font-size:21.5px;font-weight:normal;color:#0b3541;transform:scaleX(1.0364);-webkit-text-stroke:0.35px #0b3541;">Motoren Positionsüberwachung</span><span style="left:1137.3px;top:776.4px;font-size:21.5px;font-weight:normal;color:#0b3541;transform:scaleX(1.0242);-webkit-text-stroke:0.35px #0b3541;">Lese Kommentare aus LCN Modulen</span><span style="left:890.4px;top:833.0px;font-size:21.5px;font-weight:normal;color:#0b3541;transform:scaleX(1.0375);-webkit-text-stroke:0.35px #0b3541;">Sichtbare Module</span><span style="left:868.3px;top:889.0px;font-size:21.5px;font-weight:normal;color:#0b3541;transform:scaleX(1.0566);-webkit-text-stroke:0.35px #0b3541;">Zeitsynchronisation</span><span style="left:1114.5px;top:889.0px;font-size:20.5px;font-weight:bold;color:#0b3541;transform:scaleX(1.1482);-webkit-text-stroke:0.55px #0b3541;">1 hour</span><span style="left:1121.9px;top:944.5px;font-size:20.5px;font-weight:bold;color:#0b3541;transform:scaleX(1.0943);-webkit-text-stroke:0.55px #0b3541;">Rescan LCN Bus...</span><span style="left:1099.7px;top:997.5px;font-size:24.5px;font-weight:bold;color:#0b3541;transform:scaleX(1.1065);-webkit-text-stroke:0.55px #0b3541;">UPnP AV</span><span style="left:1138.3px;top:1055.0px;font-size:21.5px;font-weight:normal;color:#0b3541;transform:scaleX(1.0917);-webkit-text-stroke:0.35px #0b3541;">Aktiviert</span><span style="left:1099.7px;top:1108.2px;font-size:24.5px;font-weight:bold;color:#0b3541;transform:scaleX(1.1283);-webkit-text-stroke:0.55px #0b3541;">BACnet Configuration</span><span style="left:1138.3px;top:1165.0px;font-size:21.5px;font-weight:normal;color:#0b3541;transform:scaleX(1.0917);-webkit-text-stroke:0.35px #0b3541;">Aktiviert</span><span style="left:1100.9px;top:1274.0px;font-size:24.5px;font-weight:bold;color:#0b3541;transform:scaleX(1.1324);-webkit-text-stroke:0.55px #0b3541;">Satel</span><span style="left:1137.5px;top:1330.7px;font-size:21.5px;font-weight:normal;color:#0b3541;transform:scaleX(1.0499);-webkit-text-stroke:0.35px #0b3541;">Lese Kommentare aus Satel-Zentralle</span><span style="left:1099.8px;top:1384.0px;font-size:24.5px;font-weight:bold;color:#0b3541;transform:scaleX(1.1170);-webkit-text-stroke:0.55px #0b3541;">u::Lux</span><span style="left:1138.3px;top:1441.0px;font-size:21.5px;font-weight:normal;color:#0b3541;transform:scaleX(1.0904);-webkit-text-stroke:0.35px #0b3541;">Aktiviert</span><span style="left:1099.7px;top:1494.8px;font-size:24.5px;font-weight:bold;color:#0b3541;transform:scaleX(1.1582);-webkit-text-stroke:0.55px #0b3541;">IFTTT</span><span style="left:1138.3px;top:1551.0px;font-size:21.5px;font-weight:normal;color:#0b3541;transform:scaleX(1.0904);-webkit-text-stroke:0.35px #0b3541;">Aktiviert</span><span style="left:1104.0px;top:1607.0px;font-size:21.5px;font-weight:normal;color:#0b3541;transform:scaleX(1.1000);-webkit-text-stroke:0.35px #0b3541;">d</span><span style="left:1376.0px;top:1607.0px;font-size:21.5px;font-weight:normal;color:#0b3541;transform:scaleX(0.8462);-webkit-text-stroke:0.35px #0b3541;">T</span><span style="left:1843.5px;top:384.3px;font-size:24.5px;font-weight:bold;color:#0b3541;transform:scaleX(1.1576);-webkit-text-stroke:0.55px #0b3541;">Remote Verbindungen</span><span style="left:1756.7px;top:436.8px;font-size:21.5px;font-weight:normal;color:#0b3541;transform:scaleX(0.9850);-webkit-text-stroke:0.35px #0b3541;">Code</span><span style="left:1844.2px;top:436.8px;font-size:20.5px;font-weight:bold;color:#0b3541;transform:scaleX(1.0832);-webkit-text-stroke:0.55px #0b3541;">XXXX</span><span style="left:1954.0px;top:440.4px;font-size:20.5px;font-weight:bold;color:#0b3541;transform:scaleX(1.1503);-webkit-text-stroke:0.55px #0b3541;">Aktualisieren</span><span style="left:1865.7px;top:496.4px;font-size:20.5px;font-weight:bold;color:#0b3541;transform:scaleX(1.1509);-webkit-text-stroke:0.55px #0b3541;">Remote Autorisierungen...</span><span style="left:1882.2px;top:553.0px;font-size:21.5px;font-weight:normal;color:#0b3541;transform:scaleX(1.0760);-webkit-text-stroke:0.35px #0b3541;">Verbindung über Internet</span><span style="left:1844.5px;top:605.6px;font-size:24.5px;font-weight:bold;color:#0b3541;transform:scaleX(1.1230);-webkit-text-stroke:0.55px #0b3541;">System</span><span style="left:1865.8px;top:663.2px;font-size:20.5px;font-weight:bold;color:#0b3541;transform:scaleX(1.1437);-webkit-text-stroke:0.55px #0b3541;">Updates...</span><span style="left:1865.7px;top:719.2px;font-size:20.5px;font-weight:bold;color:#0b3541;transform:scaleX(1.1851);-webkit-text-stroke:0.55px #0b3541;">Neu starten...</span><span style="left:1865.7px;top:775.2px;font-size:20.5px;font-weight:bold;color:#0b3541;transform:scaleX(1.1709);-webkit-text-stroke:0.55px #0b3541;">Datum und Zeit...</span><span style="left:1844.8px;top:828.5px;font-size:24.5px;font-weight:bold;color:#0b3541;transform:scaleX(1.1261);-webkit-text-stroke:0.55px #0b3541;">Sicherungskopie</span><span style="left:1866.1px;top:884.8px;font-size:20.5px;font-weight:bold;color:#0b3541;transform:scaleX(1.1539);-webkit-text-stroke:0.55px #0b3541;">Speichern in Datei...</span><span style="left:1866.1px;top:940.8px;font-size:20.5px;font-weight:bold;color:#0b3541;transform:scaleX(1.1684);-webkit-text-stroke:0.55px #0b3541;">Wiederherstellen aus Datei...</span><span style="left:1843.7px;top:994.4px;font-size:24.5px;font-weight:bold;color:#0b3541;transform:scaleX(1.1232);-webkit-text-stroke:0.55px #0b3541;">Lage</span><span style="left:1722.4px;top:1050.7px;font-size:21.5px;font-weight:normal;color:#0b3541;transform:scaleX(1.0355);-webkit-text-stroke:0.35px #0b3541;">Zeitzone</span><span style="left:1858.8px;top:1050.7px;font-size:20.5px;font-weight:bold;color:#0b3541;transform:scaleX(1.1393);-webkit-text-stroke:0.55px #0b3541;">Central European Time</span><span style="left:1754.4px;top:1107.0px;font-size:21.5px;font-weight:normal;color:#0b3541;transform:scaleX(1.0432);-webkit-text-stroke:0.35px #0b3541;">Stadt</span><span style="left:1848.5px;top:1107.0px;font-size:21.5px;font-weight:normal;color:#0b3541;transform:scaleX(1.1000);-webkit-text-stroke:0.35px #0b3541;">V</span><span style="left:1960.8px;top:1107.0px;font-size:21.5px;font-weight:normal;color:#0b3541;transform:scaleX(0.8800);-webkit-text-stroke:0.35px #0b3541;">z</span><span style="left:1758.6px;top:1162.7px;font-size:21.5px;font-weight:normal;color:#0b3541;transform:scaleX(1.0290);-webkit-text-stroke:0.35px #0b3541;">Land</span><span style="left:1858.8px;top:1162.7px;font-size:20.5px;font-weight:bold;color:#0b3541;transform:scaleX(1.1132);-webkit-text-stroke:0.55px #0b3541;">Germany</span><span style="left:1866.7px;top:1219.3px;font-size:20.5px;font-weight:bold;color:#0b3541;transform:scaleX(1.0811);-webkit-text-stroke:0.55px #0b3541;">Geocode</span><span style="left:1689.4px;top:1275.0px;font-size:21.5px;font-weight:normal;color:#0b3541;transform:scaleX(1.0568);-webkit-text-stroke:0.35px #0b3541;">Breitengrad</span><span style="left:1848.5px;top:1275.0px;font-size:21.5px;font-weight:normal;color:#0b3541;transform:scaleX(1.0456);-webkit-text-stroke:0.35px #0b3541;">51.86</span><span style="left:1689.5px;top:1330.4px;font-size:21.5px;font-weight:normal;color:#0b3541;transform:scaleX(1.0229);-webkit-text-stroke:0.35px #0b3541;">Längengrad</span><span style="left:1848.5px;top:1330.4px;font-size:21.5px;font-weight:normal;color:#0b3541;transform:scaleX(1.0786);-webkit-text-stroke:0.35px #0b3541;">8.57</span><span style="left:149.5px;top:287.5px;font-size:22px;font-weight:bold;color:#0b3541;transform:scaleX(1.0623);-webkit-text-stroke:0.55px #0b3541;">Remote</span><span style="left:289.6px;top:287.5px;font-size:22px;font-weight:bold;color:#0b3541;transform:scaleX(1.0407);-webkit-text-stroke:0.55px #0b3541;">Display</span><span style="left:426.6px;top:287.5px;font-size:22px;font-weight:bold;color:#0b3541;transform:scaleX(1.0510);-webkit-text-stroke:0.55px #0b3541;">Zustand</span><span style="left:569.5px;top:287.5px;font-size:22px;font-weight:bold;color:#0b3541;transform:scaleX(1.0785);-webkit-text-stroke:0.55px #0b3541;">Diagramme</span><span style="left:754.3px;top:287.5px;font-size:22px;font-weight:bold;color:#0b3541;transform:scaleX(1.0295);-webkit-text-stroke:0.55px #0b3541;">Events</span><span style="left:884.4px;top:287.5px;font-size:22px;font-weight:bold;color:#0b3541;transform:scaleX(1.0609);-webkit-text-stroke:0.55px #0b3541;">Timer</span><span style="left:1001.9px;top:287.5px;font-size:22px;font-weight:bold;color:#0b3541;transform:scaleX(1.0030);-webkit-text-stroke:0.55px #0b3541;">Logic</span><span style="left:1116.5px;top:287.5px;font-size:22px;font-weight:bold;color:#0b3541;transform:scaleX(1.0681);-webkit-text-stroke:0.55px #0b3541;">Verbindungen</span><span style="left:1327.7px;top:287.5px;font-size:22px;font-weight:bold;color:#0b3541;transform:scaleX(1.0135);-webkit-text-stroke:0.55px #0b3541;">MODBUS</span><span style="left:1479.9px;top:287.5px;font-size:22px;font-weight:bold;color:#0b3541;transform:scaleX(1.0008);-webkit-text-stroke:0.55px #0b3541;">BACnet</span><span style="left:1615.8px;top:287.5px;font-size:22px;font-weight:bold;color:#0b3541;transform:scaleX(1.0891);-webkit-text-stroke:0.55px #0b3541;">DALI</span><span style="left:1725.4px;top:287.5px;font-size:22px;font-weight:bold;color:#0b3541;transform:scaleX(1.0502);-webkit-text-stroke:0.55px #0b3541;">Expander</span><span style="left:1885.8px;top:287.5px;font-size:22px;font-weight:bold;color:#0b3541;transform:scaleX(0.9930);-webkit-text-stroke:0.55px #0b3541;">ULUX</span><span style="left:2000.1px;top:287.5px;font-size:22px;font-weight:bold;color:#0b3541;transform:scaleX(1.0265);-webkit-text-stroke:0.55px #0b3541;">Ressourcen</span><span style="left:2183.3px;top:289.5px;font-size:22px;font-weight:bold;color:#0b3541;transform:scaleX(1.0546);-webkit-text-stroke:0.55px #0b3541;">Einstellungen</span><span style="left:2389.4px;top:287.5px;font-size:22px;font-weight:bold;color:#0b3541;transform:scaleX(1.0656);-webkit-text-stroke:0.55px #0b3541;">Benutzer</span><span style="left:2546.2px;top:287.5px;font-size:22px;font-weight:bold;color:#0b3541;transform:scaleX(1.0627);-webkit-text-stroke:0.55px #0b3541;">Status</span><span style="left:386.2px;top:100.8px;font-size:21px;font-weight:normal;color:#0c0c0d;transform:scaleX(1.0562);">DOMIQ/Base</span><span style="left:696.2px;top:169.9px;font-size:27.5px;font-weight:normal;color:#0c0c0d;transform:scaleX(0.9933);">192.168.178.76</span><span style="left:2142.2px;top:171.0px;font-size:27px;font-weight:normal;color:#737373;transform:scaleX(1.0474);">Suchen</span><span style="left:175.9px;top:233.8px;font-size:21.5px;font-weight:normal;color:#0c0c0d;transform:scaleX(1.1098);">Meistbesucht</span><span style="left:381.6px;top:233.8px;font-size:21.5px;font-weight:normal;color:#0c0c0d;transform:scaleX(1.1132);">Getting Started</span><span style="left:606.2px;top:233.8px;font-size:21.5px;font-weight:normal;color:#0c0c0d;transform:scaleX(1.0439);">DOMIQ/Base</span></div>
<div style="position:absolute;left:1115px;top:1606px;width:265px;height:25px;background:#fcee00;"></div><div style="position:absolute;left:1858px;top:1104px;width:103px;height:27px;background:#fcee00;"></div>
</body></html>
